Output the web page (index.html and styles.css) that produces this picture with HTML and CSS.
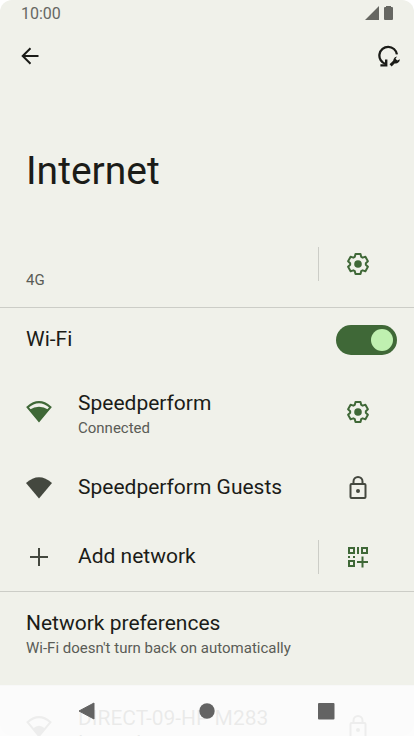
FILE: index.html
```html
<!DOCTYPE html>
<html lang="en">
<head>
<meta charset="utf-8">
<meta name="viewport" content="width=device-width, initial-scale=1">
<title>Internet</title>
<link rel="stylesheet" href="styles.css">
</head>
<body>
<svg class="defs" aria-hidden="true">
  <symbol id="gear" viewBox="-13 -13 26 26">
    <path d="M-2.5-10H2.5L3.2-7.2 4.64-6.37 7.41-7.17 9.91-2.83 7.84-.83V.83L9.91 2.83 7.41 7.17 4.64 6.37 3.2 7.2 2.5 10H-2.5L-3.2 7.2-4.64 6.37-7.41 7.17-9.91 2.83-7.84.83V-.83L-9.91-2.83-7.41-7.17-4.64-6.37-3.2-7.2z" fill="none" stroke="currentColor" stroke-width="2" stroke-linejoin="round"/>
    <circle r="3.8" fill="currentColor"/>
  </symbol>
  <symbol id="lock" viewBox="-13 -13 26 26">
    <rect x="-7.5" y="-4" width="15" height="14" rx="1" fill="none" stroke="currentColor" stroke-width="2"/>
    <path d="M-4.5-4V-6.5a4.5 4.5 0 0 1 9 0V-4" fill="none" stroke="currentColor" stroke-width="2"/>
    <circle cy="3" r="2" fill="currentColor"/>
  </symbol>
  <symbol id="wifi-high" viewBox="0 0 26 22">
    <path d="M1.5 6.2Q13-4 24.5 6.2L13 20z" fill="none" stroke="currentColor" stroke-width="2"/>
    <path d="M3.5 8.8Q13 2.8 22.5 8.8L13 20.5z" fill="currentColor"/>
  </symbol>
  <symbol id="wifi-low" viewBox="0 0 26 22">
    <path d="M1.5 6.2Q13-4 24.5 6.2L13 20z" fill="none" stroke="currentColor" stroke-width="2"/>
    <path d="M7 12.5Q13 7 19 12.5L13 20.5z" fill="currentColor"/>
  </symbol>
</svg>
<div class="screen">
  <header>
    <div class="status">
      <span>10:00</span>
      <svg width="28" height="14" viewBox="0 0 28 14" aria-hidden="true"><path d="M0 14 14 0V14zM19 2q0-1 1-1h1V0h5v1h1q1 0 1 1V13q0 1-1 1H20q-1 0-1-1z"/></svg>
    </div>
    <div class="toolbar">
      <button aria-label="Back"><svg width="18" height="18" viewBox="0 0 18 18"><path d="M17.5 9H2M9.5 1.2 1.7 9l7.8 7.8" fill="none" stroke="currentColor" stroke-width="2"/></svg></button>
      <button aria-label="Fix connectivity"><svg width="22" height="22" viewBox="0 0 22 22"><path d="M7.5 19A8.8 8.8 0 1 1 18.9 9.4" fill="none" stroke="currentColor" stroke-width="2.3"/><path d="M2.4 20.4H8.2V14.4" fill="none" stroke="currentColor" stroke-width="2.4"/><path d="m12.6 20.4 5.4-5.4" stroke="currentColor" stroke-width="3"/><path d="m19 11.4-1.5 2.4 1.8 1.8 2.5-1.4a4 4 0 0 1-5.2 4 4 4 0 0 1 2.4-6.8z" fill="currentColor"/></svg></button>
    </div>
    <h1>Internet</h1>
  </header>
  <main>
    <section class="group">
      <div class="row mobile">
        <p class="sub">4G</p>
        <button class="action split green" aria-label="Mobile network settings"><svg class="icon"><use href="#gear"/></svg></button>
      </div>
    </section>
    <section class="group">
      <label class="row toggle"><span class="title">Wi-Fi</span><input type="checkbox" role="switch" checked></label>
      <div class="row network tall">
        <svg class="wifi green"><use href="#wifi-high"/></svg>
        <div class="text"><p class="title">Speedperform</p><p class="sub">Connected</p></div>
        <button class="action green" aria-label="Speedperform settings"><svg class="icon"><use href="#gear"/></svg></button>
      </div>
      <div class="row network">
        <svg class="wifi" viewBox="0 0 26 22"><path d="M0 6Q13-5.4 26 6L13 21.5z" fill="currentColor"/></svg>
        <div class="text"><p class="title">Speedperform Guests</p></div>
        <span class="action"><svg class="icon"><use href="#lock"/></svg></span>
      </div>
      <div class="row network">
        <svg class="wifi" viewBox="0 0 26 22"><path d="M13 2v18M4 11h18" stroke="currentColor" stroke-width="2"/></svg>
        <div class="text"><p class="title">Add network</p></div>
        <button class="action split green" aria-label="Scan QR code"><svg class="icon" viewBox="-13 -13 26 26"><path d="M-9-9h5v5h-5zM4-9h5v5H4zM-9 4h5v5h-5z" fill="none" stroke="currentColor" stroke-width="2"/><path d="M0-10v7M4.5-.5v11M-1 5h11" stroke="currentColor" stroke-width="2"/><path d="M-10-1h2v2h-2zM-5-1h2v2h-2z" fill="currentColor"/></svg></button>
      </div>
    </section>
    <section class="group">
      <div class="row preferences">
        <div class="text"><p class="title">Network preferences</p><p class="sub">Wi-Fi doesn't turn back on automatically</p></div>
      </div>
    </section>
    <section>
      <div class="row network tall">
        <svg class="wifi"><use href="#wifi-low"/></svg>
        <div class="text"><p class="title">DIRECT-09-HP M283 LaserJet</p></div>
        <span class="action"><svg class="icon"><use href="#lock"/></svg></span>
      </div>
    </section>
  </main>
</div>
<nav aria-label="System navigation">
  <button aria-label="Back"><svg width="18" height="18" viewBox="0 0 18 18"><path d="M1 9 16 1v16z" stroke="currentColor" stroke-linejoin="round" fill="currentColor"/></svg></button>
  <button aria-label="Home"><svg width="18" height="18" viewBox="0 0 18 18"><circle cx="9" cy="9" r="7.7" fill="currentColor"/></svg></button>
  <button aria-label="Recent apps"><svg width="18" height="18" viewBox="0 0 18 18"><rect x="0" y="1" width="16.5" height="16.5" rx="1" fill="currentColor"/></svg></button>
</nav>
</body>
</html>
```
FILE: styles.css
```css
* { box-sizing: border-box; }
body, h1, p { margin: 0; }
body {
  height: 100vh;
  overflow: hidden;
  background: #fff;
  color: #1b1c18;
  font-family: Roboto, sans-serif;
}
button {
  display: grid;
  place-items: center;
  padding: 0;
  border: 0;
  background: none;
  color: inherit;
}
svg { display: block; }
.defs { position: absolute; width: 0; height: 0; }
.screen {
  height: 100vh;
  overflow: hidden;
  border-radius: 12px;
  background: #f0f1ea;
}
.status {
  display: flex;
  justify-content: space-between;
  align-items: center;
  height: 26px;
  padding: 0 21px;
  color: #666762;
  font-size: 16px;
}
.status svg { fill: currentColor; }
.toolbar {
  display: flex;
  justify-content: space-between;
  align-items: center;
  height: 60px;
  padding: 0 14px 0 21px;
}
h1 {
  padding: 62px 26px 0;
  font-size: 39px;
  font-weight: 400;
  line-height: 46px;
}
.group { border-bottom: 1px solid #cccdc7; }
.row {
  display: flex;
  align-items: center;
  height: 69px;
  padding-left: 26px;
}
.title { font-size: 21px; line-height: 25px; }
.sub { color: #5a5c56; font-size: 15px; line-height: 25px; }
.text { flex: 1; min-width: 0; }
.action {
  display: grid;
  place-items: center;
  width: 96px;
  height: 34px;
  padding-right: 17px;
  color: #44483f;
}
.split { border-left: 1px solid #cccdc7; }
.icon { width: 26px; height: 26px; }
.green { color: #3f6837; }
.mobile {
  height: 113px;
  justify-content: space-between;
  padding-top: 27px;
}
.mobile .sub { padding-top: 32px; }
.toggle {
  height: 63px;
  justify-content: space-between;
  padding-right: 17px;
}
.toggle input {
  display: flex;
  justify-content: flex-end;
  align-items: center;
  appearance: none;
  width: 61px;
  height: 30px;
  margin: 0;
  padding: 4px;
  border-radius: 15px;
  background: #3f6837;
}
.toggle input::before {
  content: "";
  width: 22px;
  height: 22px;
  border-radius: 50%;
  background: #bff0b0;
}
.tall { height: 82px; }
.tall .text { padding-top: 8px; }
.wifi {
  width: 26px;
  height: 22px;
  margin-right: 26px;
  color: #44483f;
}
.wifi.green { color: #3f6837; }
.preferences { height: 93px; padding-bottom: 6px; }
nav {
  position: fixed;
  inset: auto 0 0;
  display: flex;
  justify-content: center;
  gap: 102px;
  height: 51px;
  background: rgba(252, 252, 252, .92);
  color: #636363;
}
```
